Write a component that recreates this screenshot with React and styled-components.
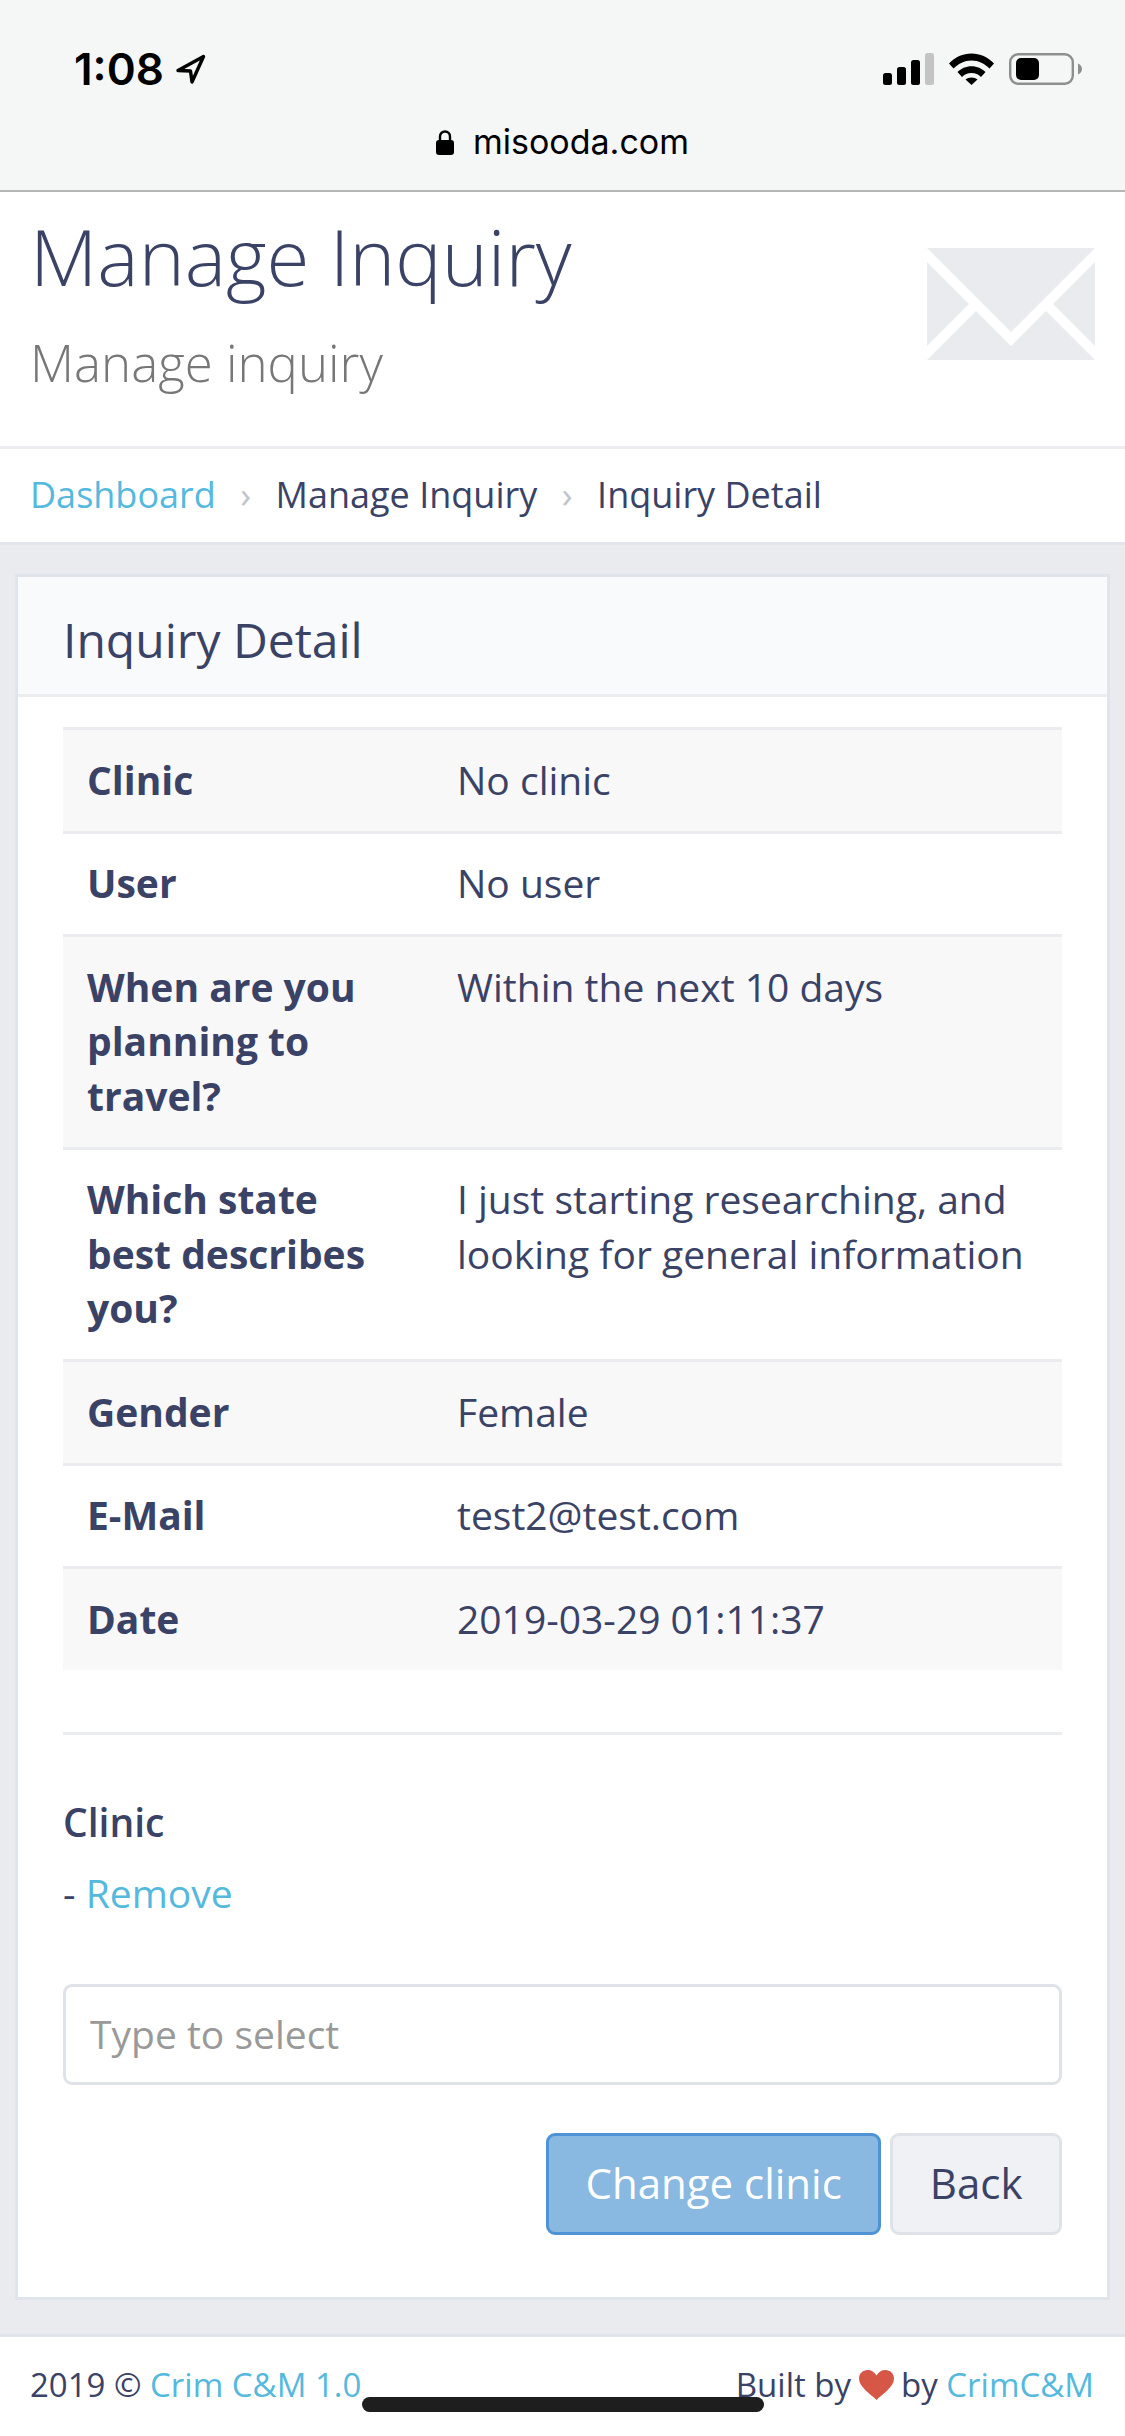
import React from 'react'
import styled, { createGlobalStyle } from 'styled-components'

const GlobalStyle = createGlobalStyle`
  html, body {
    margin: 0;
    padding: 0;
    background: #fff;
  }
  * {
    box-sizing: border-box;
  }
`

const Page = styled.div`
  position: relative;
  display: flex;
  flex-direction: column;
  width: 1125px;
  height: 2436px;
  overflow: hidden;
  background: #e9ebef;
  color: #3a4266;
  font-family: "Open Sans", "Liberation Sans", sans-serif;
  font-size: 39px;
  line-height: 54.5px;
`

const Chrome = styled.div`
  display: flex;
  flex-direction: column;
  height: 192px;
  padding-top: 53px;
  background: #f5f6f6;
  border-bottom: 2px solid #b5b5b5;
  color: #000;
  font-family: Inter, "Liberation Sans", sans-serif;
`

const StatusRow = styled.div`
  display: flex;
  justify-content: space-between;
  height: 32px;
  padding: 0 43px 0 74px;
`

const Clock = styled.div`
  display: flex;
  align-items: center;
  gap: 12px;
  font-size: 44px;
  font-weight: 600;
  line-height: 32px;
`

const StatusIcons = styled.div`
  display: flex;
  align-items: center;
  gap: 15px;
`

const UrlRow = styled.div`
  display: flex;
  align-items: center;
  justify-content: center;
  gap: 19px;
  margin-top: 36px;
  font-size: 34px;
  line-height: 42px;
`

const Head = styled.header`
  display: flex;
  justify-content: space-between;
  height: 257px;
  padding: 0 30px 0 30px;
  background: #fff;
  border-bottom: 3px solid #ebedf1;
`

const Title = styled.h1`
  margin: 22px 0 0;
  font-size: 78px;
  font-weight: 300;
  line-height: 84px;
`

const Subtitle = styled.p`
  margin: 34px 0 0;
  color: #777;
  font-size: 51px;
  font-weight: 300;
  line-height: 60px;
`

const Mail = styled.svg`
  width: 168px;
  height: 112px;
  margin-top: 56px;
  fill: #e9ebef;
`

const Crumbs = styled.nav`
  display: flex;
  align-items: center;
  height: 96px;
  padding: 0 30px;
  background: #fff;
  border-bottom: 3px solid #e2e5eb;
  font-size: 36px;
`

const CrumbLink = styled.a`
  color: #55b9de;
`

const CrumbSep = styled.span`
  margin: 0 24.5px;
  color: #c0c4cc;
`

const Main = styled.main`
  padding: 29px 15px 0;
`

const Card = styled.section`
  height: 1726px;
  background: #fff;
  border: 3px solid #dfe5ea;
`

const CardHead = styled.h2`
  height: 120px;
  margin: 0;
  padding: 0 0 0 45px;
  background: #f9fafb;
  border-bottom: 3px solid #ebedf1;
  font-size: 48px;
  font-weight: 400;
  line-height: 125px;
`

const CardBody = styled.div`
  padding: 30px 45px 0;
`

const Table = styled.table`
  width: 100%;
  border-collapse: collapse;
  table-layout: fixed;
`

const Row = styled.tr`
  background: ${(p) => (p.$odd ? '#f8f8f9' : '#fff')};
  border-top: 3px solid #ebecf0;
`

const Label = styled.th`
  width: 370px;
  padding: 22.5px 24px 23.5px;
  font-weight: 700;
  text-align: left;
  vertical-align: top;
`

const Value = styled.td`
  padding: 22.5px 24px 23.5px;
  vertical-align: top;
`

const Divider = styled.hr`
  margin: 62px 0 0;
  border: 0;
  border-top: 3px solid #ebecf0;
`

const FieldTitle = styled.div`
  margin-top: 60px;
  font-weight: 600;
`

const RemoveLine = styled.div`
  margin-top: 17px;
`

const Link = styled.a`
  color: #55b9de;
`

const SelectInput = styled.input`
  display: block;
  width: 100%;
  height: 101px;
  margin-top: 63px;
  padding: 0 24px 2px;
  background: #fff;
  border: 3px solid #dfe3e8;
  border-radius: 9px;
  color: #3a4266;
  font: inherit;
  &::placeholder {
    color: #999;
    opacity: 1;
  }
`

const Actions = styled.div`
  display: flex;
  justify-content: flex-end;
  gap: 9px;
  margin-top: 48px;
`

const Button = styled.button`
  height: 102px;
  padding: 0 36.5px;
  background: ${(p) => (p.$primary ? '#89b8e1' : '#f0f1f5')};
  border: 3px solid ${(p) => (p.$primary ? '#4f93d7' : '#dfe3e8')};
  border-radius: 9px;
  color: ${(p) => (p.$primary ? '#fff' : '#3a4266')};
  font: inherit;
  font-size: 42px;
`

const Footer = styled.footer`
  display: flex;
  flex: 1;
  align-items: flex-start;
  justify-content: space-between;
  margin-top: 34px;
  padding: 26px 31px 0 30px;
  background: #fff;
  border-top: 3px solid #dfe5ea;
  font-size: 33px;
  line-height: 44px;
`

const BuiltBy = styled.div`
  display: flex;
  align-items: center;
  gap: 7.5px;
`

const Heart = styled.svg`
  width: 35px;
  height: 30px;
  fill: #d65745;
`

const HomeBar = styled.div`
  position: absolute;
  left: 362px;
  top: 2397px;
  width: 402px;
  height: 15px;
  background: #1e1e1e;
  border-radius: 8px;
`

const rows = [
  ['Clinic', 'No clinic'],
  ['User', 'No user'],
  ['When are you planning to travel?', 'Within the next 10 days'],
  ['Which state best describes you?', 'I just starting researching, and looking for general information'],
  ['Gender', 'Female'],
  ['E-Mail', 'test2@test.com'],
  ['Date', '2019-03-29 01:11:37'],
]

const Signal = () => (
  <svg width="51" height="32" viewBox="0 0 51 32">
    <rect x="0" y="20" width="9" height="12" rx="2.5" />
    <rect x="14" y="14" width="9" height="18" rx="2.5" />
    <rect x="28" y="7" width="9" height="25" rx="2.5" />
    <rect x="42" y="0" width="9" height="32" rx="2.5" fill="#c4c4c4" />
  </svg>
)

const Wifi = () => (
  <svg width="45" height="32" viewBox="0 0 45 32">
    <path d="M0 10.5C6 4 14 0.5 22.5 0.5S39 4 45 10.5L40.5 15.5C35.5 10.5 29.5 7.5 22.5 7.5S9.5 10.5 4.5 15.5Z" />
    <path d="M8.5 19C12 15.5 17 13.2 22.5 13.2S33 15.5 36.5 19L32 24C29.5 21.5 26.2 20 22.5 20S15.5 21.5 13 24Z" />
    <path d="M16.5 26.5C18 25.2 20.2 24.5 22.5 24.5S27 25.2 28.5 26.5L22.5 32Z" />
  </svg>
)

const Battery = () => (
  <svg width="73" height="32" viewBox="0 0 73 32">
    <rect x="1.2" y="1.2" width="62.6" height="29.6" rx="8" fill="none" stroke="#8e8e8e" strokeWidth="2.4" />
    <rect x="7" y="5" width="23" height="22" rx="5" />
    <path d="M69 10.5C71.5 11.5 73 13.5 73 16S71.5 20.5 69 21.5Z" fill="#8e8e8e" />
  </svg>
)

const App = () => (
  <Page>
    <GlobalStyle />
    <Chrome>
      <StatusRow>
        <Clock>
          1:08
          <svg width="30" height="30" viewBox="0 0 30 30">
            <path d="M2 16.5L27.5 2.5L16 28L14.5 17Z" fill="none" stroke="#000" strokeWidth="3.4" strokeLinejoin="round" />
          </svg>
        </Clock>
        <StatusIcons>
          <Signal />
          <Wifi />
          <Battery />
        </StatusIcons>
      </StatusRow>
      <UrlRow>
        <svg width="18" height="25" viewBox="0 0 18 25">
          <path d="M4 11V6.5a5 5 0 0 1 10 0V11" fill="none" stroke="#000" strokeWidth="2.4" />
          <rect x="0" y="10" width="18" height="15" rx="3" />
        </svg>
        misooda.com
      </UrlRow>
    </Chrome>
    <Head>
      <div>
        <Title>Manage Inquiry</Title>
        <Subtitle>Manage inquiry</Subtitle>
      </div>
      <Mail viewBox="0 0 168 112">
        <polygon points="0,0 168,0 84,84" />
        <polygon points="0,14 42,56 0,98" />
        <polygon points="168,14 126,56 168,98" />
        <polygon points="0,112 49,63 84,98 119,63 168,112" />
      </Mail>
    </Head>
    <Crumbs>
      <CrumbLink>Dashboard</CrumbLink>
      <CrumbSep>›</CrumbSep>
      <span>Manage Inquiry</span>
      <CrumbSep>›</CrumbSep>
      <span>Inquiry Detail</span>
    </Crumbs>
    <Main>
      <Card>
        <CardHead>Inquiry Detail</CardHead>
        <CardBody>
          <Table>
            <tbody>
              {rows.map(([label, value], i) => (
                <Row key={label} $odd={i % 2 === 0}>
                  <Label>{label}</Label>
                  <Value>{value}</Value>
                </Row>
              ))}
            </tbody>
          </Table>
          <Divider />
          <FieldTitle>Clinic</FieldTitle>
          <RemoveLine>- <Link>Remove</Link></RemoveLine>
          <SelectInput placeholder="Type to select" />
          <Actions>
            <Button $primary>Change clinic</Button>
            <Button>Back</Button>
          </Actions>
        </CardBody>
      </Card>
    </Main>
    <Footer>
      <div>2019 © <Link>Crim C&amp;M 1.0</Link></div>
      <BuiltBy>
        Built by
        <Heart viewBox="0 0 35 30">
          <path d="M17.5 30C12 24.5 0 17 0 8.5C0 3.5 4 0 8.5 0C12.5 0 15.5 2 17.5 5.5C19.5 2 22.5 0 26.5 0C31 0 35 3.5 35 8.5C35 17 23 24.5 17.5 30Z" />
        </Heart>
        <span>by <Link>CrimC&amp;M</Link></span>
      </BuiltBy>
    </Footer>
    <HomeBar />
  </Page>
)

export default App
